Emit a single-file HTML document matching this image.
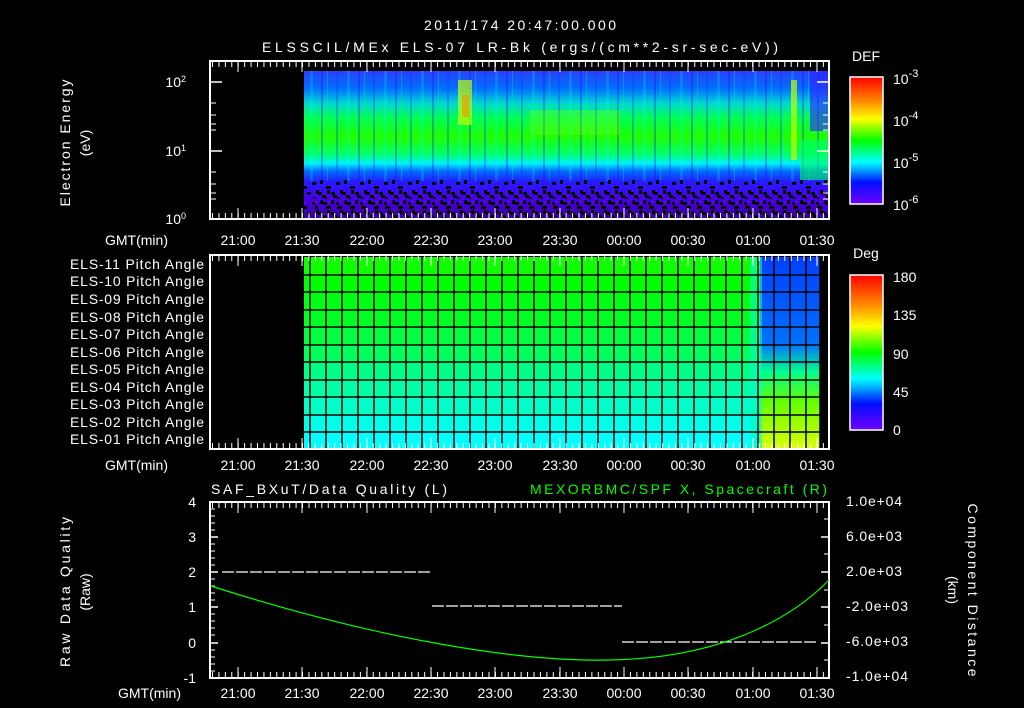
<!DOCTYPE html>
<html><head><style>
html,body{margin:0;padding:0;background:#000;}
svg{display:block}
text{font-family:"Liberation Sans",sans-serif;fill:#fff;font-size:14px}
</style></head><body>
<svg width="1024" height="708" viewBox="0 0 1024 708" xmlns="http://www.w3.org/2000/svg">
<defs>
<linearGradient id="spec" x1="0" y1="0" x2="0" y2="1">
<stop offset="0" stop-color="#2a40ff"/>
<stop offset="0.12" stop-color="#0070ff"/>
<stop offset="0.22" stop-color="#00d8d0"/>
<stop offset="0.32" stop-color="#00ff50"/>
<stop offset="0.45" stop-color="#20ff00"/>
<stop offset="0.57" stop-color="#00ff70"/>
<stop offset="0.63" stop-color="#00f0ff"/>
<stop offset="0.68" stop-color="#0070ff"/>
<stop offset="0.75" stop-color="#2020ff"/>
<stop offset="0.85" stop-color="#4a00f0"/>
<stop offset="1" stop-color="#3a00a0"/>
</linearGradient>
<linearGradient id="rainbow" x1="0" y1="0" x2="0" y2="1">
<stop offset="0" stop-color="#ff0000"/>
<stop offset="0.2" stop-color="#ff9000"/>
<stop offset="0.33" stop-color="#ffff00"/>
<stop offset="0.5" stop-color="#00ff00"/>
<stop offset="0.67" stop-color="#00ffff"/>
<stop offset="0.83" stop-color="#0010ff"/>
<stop offset="1" stop-color="#7000ff"/>
</linearGradient>
<linearGradient id="right" x1="0" y1="0" x2="0" y2="1">
<stop offset="0" stop-color="#0040ff"/>
<stop offset="0.45" stop-color="#0070ff"/>
<stop offset="0.6" stop-color="#00ff90"/>
<stop offset="0.75" stop-color="#60ff00"/>
<stop offset="1" stop-color="#e0ff00"/>
</linearGradient>
<pattern id="noise" width="24" height="20" patternUnits="userSpaceOnUse">
<rect x="0" y="2" width="4" height="3" fill="#000"/><rect x="8" y="0" width="3" height="4" fill="#000"/>
<rect x="14" y="6" width="5" height="3" fill="#000"/><rect x="4" y="10" width="3" height="4" fill="#000"/>
<rect x="19" y="12" width="4" height="3" fill="#000"/><rect x="10" y="15" width="4" height="3" fill="#000"/>
<rect x="1" y="17" width="3" height="2" fill="#000"/><rect x="16" y="1" width="2" height="3" fill="#6000ff"/>
</pattern>
<pattern id="streak" width="37" height="150" patternUnits="userSpaceOnUse">
<rect x="3" y="0" width="2" height="150" fill="#0040ff" opacity="0.35"/>
<rect x="14" y="0" width="3" height="150" fill="#00ffff" opacity="0.2"/>
<rect x="25" y="0" width="2" height="150" fill="#2000ff" opacity="0.3"/>
<rect x="31" y="0" width="1" height="150" fill="#00ff80" opacity="0.3"/>
</pattern>
</defs>

<text x="520" y="30" text-anchor="middle" font-size="16" textLength="192" lengthAdjust="spacing">2011/174 20:47:00.000</text>
<text x="520" y="52" text-anchor="middle" font-size="16" textLength="516" lengthAdjust="spacing">ELSSCIL/MEx ELS-07 LR-Bk  (ergs/(cm**2-sr-sec-eV))</text>

<!-- top panel -->
<rect x="304" y="71" width="525" height="147" fill="url(#spec)"/>
<rect x="304" y="71" width="525" height="110" fill="url(#streak)"/>
<rect x="304" y="180" width="525" height="38" fill="url(#noise)"/>
<rect x="304" y="190" width="525" height="28" fill="url(#noise)" transform="translate(11 0)"/>
<rect x="458" y="80" width="14" height="45" fill="#c0ff00" opacity="0.7"/>
<rect x="462" y="95" width="7" height="22" fill="#ff9000" opacity="0.6"/>
<rect x="530" y="110" width="90" height="25" fill="#80ff00" opacity="0.3"/>
<rect x="791" y="80" width="6" height="80" fill="#c0ff00" opacity="0.7"/>
<rect x="800" y="140" width="29" height="40" fill="#00ff60" opacity="0.6"/>
<rect x="810" y="71" width="19" height="60" fill="#3020ff" opacity="0.6"/>
<rect x="210" y="61" width="619" height="158" fill="none" stroke="#fff" stroke-width="2"/>
<g stroke="#fff" fill="none">
<path d="M210 64H830M210 216H830" stroke-width="6" stroke-dasharray="1 5.43" stroke-dashoffset="-2"/>
<path d="M238 61V72M302 61V72M367 61V72M431 61V72M495 61V72M560 61V72M624 61V72M688 61V72M753 61V72M817 61V72M238 219V208M302 219V208M367 219V208M431 219V208M495 219V208M560 219V208M624 219V208M688 219V208M753 219V208M817 219V208"/>
<path d="M210 82H222M210 151H222M829 82H817M829 151H817" stroke-width="1.5"/>
<path d="M210 103H216M210 115H216M210 124H216M210 130H216M210 172H216M210 184H216M210 193H216M210 199H216M829 103H823M829 115H823M829 124H823M829 130H823M829 172H823M829 184H823M829 193H823M829 199H823"/>
</g>
<text x="186" y="87" text-anchor="end" font-size="13">10<tspan dy="-5" font-size="9">2</tspan></text>
<text x="186" y="156" text-anchor="end" font-size="13">10<tspan dy="-5" font-size="9">1</tspan></text>
<text x="186" y="224" text-anchor="end" font-size="13">10<tspan dy="-5" font-size="9">0</tspan></text>
<text transform="translate(70 143) rotate(-90)" text-anchor="middle" font-size="15" textLength="127" lengthAdjust="spacing">Electron Energy</text>
<text transform="translate(90 143) rotate(-90)" text-anchor="middle" font-size="15">(eV)</text>

<text x="866" y="61" text-anchor="middle" font-size="16">DEF</text>
<rect x="850" y="77" width="33" height="127" fill="url(#rainbow)" stroke="#fff" stroke-width="1.5"/>
<text x="893" y="84" font-size="16">10<tspan dy="-7" font-size="11">-3</tspan></text>
<text x="893" y="126" font-size="16">10<tspan dy="-7" font-size="11">-4</tspan></text>
<text x="893" y="168" font-size="16">10<tspan dy="-7" font-size="11">-5</tspan></text>
<text x="893" y="210" font-size="16">10<tspan dy="-7" font-size="11">-6</tspan></text>

<g font-size="14">
<text x="168" y="245" text-anchor="end">GMT(min)</text>
<text x="238" y="245" text-anchor="middle">21:00</text><text x="302" y="245" text-anchor="middle">21:30</text>
<text x="367" y="245" text-anchor="middle">22:00</text><text x="431" y="245" text-anchor="middle">22:30</text>
<text x="495" y="245" text-anchor="middle">23:00</text><text x="560" y="245" text-anchor="middle">23:30</text>
<text x="624" y="245" text-anchor="middle">00:00</text><text x="688" y="245" text-anchor="middle">00:30</text>
<text x="753" y="245" text-anchor="middle">01:00</text><text x="817" y="245" text-anchor="middle">01:30</text>
</g>

<!-- middle panel -->
<g>
<rect x="304" y="257" width="516" height="18" fill="#10ff00"/>
<rect x="304" y="275" width="516" height="17" fill="#00ff00"/>
<rect x="304" y="292" width="516" height="18" fill="#00ff10"/>
<rect x="304" y="310" width="516" height="17" fill="#00ff20"/>
<rect x="304" y="327" width="516" height="18" fill="#00ff40"/>
<rect x="304" y="345" width="516" height="17" fill="#00ff60"/>
<rect x="304" y="362" width="516" height="18" fill="#00ff88"/>
<rect x="304" y="380" width="516" height="17" fill="#00ffa8"/>
<rect x="304" y="397" width="516" height="18" fill="#00ffc8"/>
<rect x="304" y="415" width="516" height="17" fill="#00ffe8"/>
<rect x="304" y="432" width="516" height="17" fill="#00ffff"/>
<rect x="760" y="257" width="60" height="192" fill="url(#right)"/>
<rect x="750" y="257" width="12" height="192" fill="#00ffc0" opacity="0.6"/>
</g>
<g stroke="#000" stroke-width="1.5">
<path d="M304 275H820M304 292H820M304 310H820M304 327H820M304 345H820M304 362H820M304 380H820M304 397H820M304 415H820M304 432H820"/>
<path d="M310 257V449M326 257V449M342 257V449M358 257V449M374 257V449M390 257V449M406 257V449M422 257V449M438 257V449M454 257V449M470 257V449M486 257V449M502 257V449M518 257V449M534 257V449M550 257V449M566 257V449M582 257V449M598 257V449M614 257V449M630 257V449M646 257V449M662 257V449M678 257V449M694 257V449M710 257V449M726 257V449M742 257V449M758 257V449M774 257V449M790 257V449M806 257V449M820 257V449"/>
</g>
<rect x="210" y="255" width="619" height="194" fill="none" stroke="#fff" stroke-width="2"/>
<g stroke="#fff" fill="none">
<path d="M210 258H830M210 446H830" stroke-width="6" stroke-dasharray="1 5.43" stroke-dashoffset="-2"/>
<path d="M238 255V266M302 255V266M367 255V266M431 255V266M495 255V266M560 255V266M624 255V266M688 255V266M753 255V266M817 255V266M238 449V438M302 449V438M367 449V438M431 449V438M495 449V438M560 449V438M624 449V438M688 449V438M753 449V438M817 449V438"/>
</g>
<g font-size="13" text-anchor="end">
<text x="204" y="269" textLength="134" lengthAdjust="spacing">ELS-11 Pitch Angle</text><text x="204" y="286" textLength="134" lengthAdjust="spacing">ELS-10 Pitch Angle</text>
<text x="204" y="304" textLength="134" lengthAdjust="spacing">ELS-09 Pitch Angle</text><text x="204" y="322" textLength="134" lengthAdjust="spacing">ELS-08 Pitch Angle</text>
<text x="204" y="339" textLength="134" lengthAdjust="spacing">ELS-07 Pitch Angle</text><text x="204" y="357" textLength="134" lengthAdjust="spacing">ELS-06 Pitch Angle</text>
<text x="204" y="374" textLength="134" lengthAdjust="spacing">ELS-05 Pitch Angle</text><text x="204" y="392" textLength="134" lengthAdjust="spacing">ELS-04 Pitch Angle</text>
<text x="204" y="409" textLength="134" lengthAdjust="spacing">ELS-03 Pitch Angle</text><text x="204" y="427" textLength="134" lengthAdjust="spacing">ELS-02 Pitch Angle</text>
<text x="204" y="444" textLength="134" lengthAdjust="spacing">ELS-01 Pitch Angle</text>
</g>
<text x="866" y="258" text-anchor="middle" font-size="16">Deg</text>
<rect x="850" y="275" width="33" height="155" fill="url(#rainbow)" stroke="#fff" stroke-width="1.5"/>
<g font-size="16"><text x="893" y="282">180</text><text x="893" y="320">135</text><text x="893" y="359">90</text><text x="893" y="397">45</text><text x="893" y="435">0</text></g>

<g font-size="14">
<text x="168" y="470" text-anchor="end">GMT(min)</text>
<text x="238" y="470" text-anchor="middle">21:00</text><text x="302" y="470" text-anchor="middle">21:30</text>
<text x="367" y="470" text-anchor="middle">22:00</text><text x="431" y="470" text-anchor="middle">22:30</text>
<text x="495" y="470" text-anchor="middle">23:00</text><text x="560" y="470" text-anchor="middle">23:30</text>
<text x="624" y="470" text-anchor="middle">00:00</text><text x="688" y="470" text-anchor="middle">00:30</text>
<text x="753" y="470" text-anchor="middle">01:00</text><text x="817" y="470" text-anchor="middle">01:30</text>
</g>

<!-- bottom panel -->
<text x="211" y="494" font-size="15" textLength="236" lengthAdjust="spacing">SAF_BXuT/Data Quality (L)</text>
<text x="530" y="494" font-size="15" style="fill:#00ff00" textLength="297" lengthAdjust="spacing">MEXORBMC/SPF X, Spacecraft (R)</text>
<rect x="210" y="502" width="619" height="176" fill="none" stroke="#fff" stroke-width="2"/>
<g stroke="#fff" fill="none">
<path d="M210 505H830M210 675H830" stroke-width="6" stroke-dasharray="1 5.43" stroke-dashoffset="-2"/>
<path d="M238 502V513M302 502V513M367 502V513M431 502V513M495 502V513M560 502V513M624 502V513M688 502V513M753 502V513M817 502V513M238 678V667M302 678V667M367 678V667M431 678V667M495 678V667M560 678V667M624 678V667M688 678V667M753 678V667M817 678V667"/>
<path d="M210 537H218M210 572H218M210 607H218M210 643H218M829 537H821M829 572H821M829 607H821M829 643H821" stroke-width="1.5"/>
<path d="M210 509H215M210 516H215M210 523H215M210 530H215M210 544H215M210 551H215M210 558H215M210 565H215M210 579H215M210 586H215M210 593H215M210 600H215M210 614H215M210 621H215M210 628H215M210 635H215M210 650H215M210 657H215M210 664H215M210 671H215M829 519H824M829 554H824M829 590H824M829 625H824M829 660H824"/>
</g>
<g stroke="#fff" stroke-width="1.2" stroke-dasharray="12 2">
<path d="M222 572H432M432 606H622M622 642H818"/>
</g>
<path d="M211 586 C380 640 520 662 610 660 C720 658 790 620 829 580" fill="none" stroke="#00ff00" stroke-width="1.2"/>
<g font-size="14" text-anchor="end">
<text x="196" y="507">4</text><text x="196" y="542">3</text><text x="196" y="577">2</text>
<text x="196" y="612">1</text><text x="196" y="648">0</text><text x="196" y="683">-1</text>
</g>
<g font-size="12">
<text x="846" y="506" textLength="56" lengthAdjust="spacing">1.0e+04</text><text x="846" y="541" textLength="56" lengthAdjust="spacing">6.0e+03</text><text x="846" y="576" textLength="56" lengthAdjust="spacing">2.0e+03</text>
<text x="846" y="611" textLength="62" lengthAdjust="spacing">-2.0e+03</text><text x="846" y="646" textLength="62" lengthAdjust="spacing">-6.0e+03</text><text x="846" y="681" textLength="62" lengthAdjust="spacing">-1.0e+04</text>
</g>
<text transform="translate(70 592) rotate(-90)" text-anchor="middle" font-size="15" textLength="150" lengthAdjust="spacing">Raw Data Quality</text>
<text transform="translate(90 592) rotate(-90)" text-anchor="middle" font-size="15">(Raw)</text>
<text transform="translate(968 590) rotate(90)" text-anchor="middle" font-size="15" textLength="173" lengthAdjust="spacing">Component Distance</text>
<text transform="translate(948 590) rotate(90)" text-anchor="middle" font-size="15">(km)</text>
<g font-size="14">
<text x="181" y="698" text-anchor="end">GMT(min)</text>
<text x="238" y="698" text-anchor="middle">21:00</text><text x="302" y="698" text-anchor="middle">21:30</text>
<text x="367" y="698" text-anchor="middle">22:00</text><text x="431" y="698" text-anchor="middle">22:30</text>
<text x="495" y="698" text-anchor="middle">23:00</text><text x="560" y="698" text-anchor="middle">23:30</text>
<text x="624" y="698" text-anchor="middle">00:00</text><text x="688" y="698" text-anchor="middle">00:30</text>
<text x="753" y="698" text-anchor="middle">01:00</text><text x="817" y="698" text-anchor="middle">01:30</text>
</g>
</svg>
</body></html>
